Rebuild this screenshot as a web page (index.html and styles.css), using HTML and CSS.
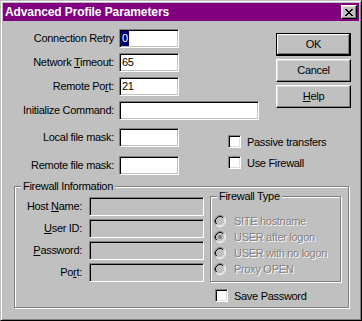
FILE: index.html
```html
<!DOCTYPE html>
<html>
<head>
<meta charset="utf-8">
<link rel="stylesheet" href="styles.css">
</head>
<body>
<div class="window">
  <div class="titlebar">
    <span class="title">Advanced Profile Parameters</span>
    <span class="close">
      <svg width="8" height="7" viewBox="0 0 8 7" shape-rendering="crispEdges">
        <path d="M0 0h2v1h-2zM6 0h2v1h-2zM1 1h2v1h-2zM5 1h2v1h-2zM2 2h4v1h-4zM3 3h2v1h-2zM2 4h4v1h-4zM1 5h2v1h-2zM5 5h2v1h-2zM0 6h2v1h-2zM6 6h2v1h-2z" fill="#000"/>
      </svg>
    </span>
  </div>
  <div class="body">
    <div class="top">
      <div class="lbl row1">Connection Retry</div>
      <div class="edit short row1"><span class="sel">0</span></div>
      <div class="lbl row2">Network <u>T</u>imeout:</div>
      <div class="edit short row2">65</div>
      <div class="lbl row3">Remote Po<u>r</u>t:</div>
      <div class="edit short row3">21</div>
      <div class="lbl row4">Initialize Command:</div>
      <div class="edit long row4"></div>
      <div class="lbl row5">Local file mask:</div>
      <div class="edit short row5"></div>
      <div class="lbl row6">Remote file mask:</div>
      <div class="edit short row6"></div>

      <div class="buttons">
        <div class="btn default">OK</div>
        <div class="btn">Cancel</div>
        <div class="btn"><u>H</u>elp</div>
      </div>

      <div class="checks">
        <div class="check"><span class="box"></span><span>Passive transfers</span></div>
        <div class="check"><span class="box"></span><span>Use Firewall</span></div>
      </div>
    </div>

    <div class="group fw">
      <span class="legend">Firewall Information</span>
      <div class="fw-fields">
        <div class="lbl">Host <u>N</u>ame:</div>
        <div class="edit disabled"></div>
        <div class="lbl"><u>U</u>ser ID:</div>
        <div class="edit disabled"></div>
        <div class="lbl"><u>P</u>assword:</div>
        <div class="edit disabled"></div>
        <div class="lbl">Po<u>r</u>t:</div>
        <div class="edit disabled"></div>
      </div>
      <div class="fw-right">
        <div class="group type">
          <span class="legend">Firewall Type</span>
          <div class="radio"><svg width="12" height="12" viewBox="0 0 12 12"><circle cx="6" cy="6" r="4.2" fill="#c0c0c0"/><path d="M2.11 9.89A5.5 5.5 0 0 1 9.89 2.11" fill="none" stroke="#808080"/><path d="M9.89 2.11A5.5 5.5 0 0 1 2.11 9.89" fill="none" stroke="#fff"/><path d="M2.82 9.18A4.5 4.5 0 0 1 9.18 2.82" fill="none" stroke="#000"/><path d="M9.18 2.82A4.5 4.5 0 0 1 2.82 9.18" fill="none" stroke="#dfdfdf"/></svg><span class="dis">SITE hostname</span></div>
          <div class="radio"><svg width="12" height="12" viewBox="0 0 12 12"><circle cx="6" cy="6" r="4.2" fill="#c0c0c0"/><path d="M2.11 9.89A5.5 5.5 0 0 1 9.89 2.11" fill="none" stroke="#808080"/><path d="M9.89 2.11A5.5 5.5 0 0 1 2.11 9.89" fill="none" stroke="#fff"/><path d="M2.82 9.18A4.5 4.5 0 0 1 9.18 2.82" fill="none" stroke="#000"/><path d="M9.18 2.82A4.5 4.5 0 0 1 2.82 9.18" fill="none" stroke="#dfdfdf"/><circle cx="6" cy="6" r="2" fill="#808080"/></svg><span class="dis">USER after logon</span></div>
          <div class="radio"><svg width="12" height="12" viewBox="0 0 12 12"><circle cx="6" cy="6" r="4.2" fill="#c0c0c0"/><path d="M2.11 9.89A5.5 5.5 0 0 1 9.89 2.11" fill="none" stroke="#808080"/><path d="M9.89 2.11A5.5 5.5 0 0 1 2.11 9.89" fill="none" stroke="#fff"/><path d="M2.82 9.18A4.5 4.5 0 0 1 9.18 2.82" fill="none" stroke="#000"/><path d="M9.18 2.82A4.5 4.5 0 0 1 2.82 9.18" fill="none" stroke="#dfdfdf"/></svg><span class="dis">USER with no logon</span></div>
          <div class="radio"><svg width="12" height="12" viewBox="0 0 12 12"><circle cx="6" cy="6" r="4.2" fill="#c0c0c0"/><path d="M2.11 9.89A5.5 5.5 0 0 1 9.89 2.11" fill="none" stroke="#808080"/><path d="M9.89 2.11A5.5 5.5 0 0 1 2.11 9.89" fill="none" stroke="#fff"/><path d="M2.82 9.18A4.5 4.5 0 0 1 9.18 2.82" fill="none" stroke="#000"/><path d="M9.18 2.82A4.5 4.5 0 0 1 2.82 9.18" fill="none" stroke="#dfdfdf"/></svg><span class="dis">Proxy OPEN</span></div>
        </div>
        <div class="check save"><span class="box"></span><span>Save Password</span></div>
      </div>
    </div>
  </div>
</div>
</body>
</html>
```

FILE: styles.css
```css
html, body {
  margin: 0;
  padding: 0;
  background: #c0c0c0;
}
body {
  font-family: "Liberation Sans", Arial, sans-serif;
  font-size: 11px;
  letter-spacing: -0.3px;
  color: #000;
}
u { text-decoration: underline; text-underline-offset: 1px; }

.window {
  width: 362px;
  height: 321px;
  box-sizing: border-box;
  border: 1px solid;
  border-color: #c0c0c0 #000 #000 #c0c0c0;
  box-shadow: inset 1px 1px #fff, inset -1px -1px #808080;
  padding: 2px;
  background: #c0c0c0;
  display: flex;
  flex-direction: column;
}

.titlebar {
  height: 18px;
  background: #800080;
  display: flex;
  align-items: center;
  justify-content: space-between;
  flex: none;
}
.title {
  color: #fff;
  font-weight: bold;
  font-size: 12px;
  letter-spacing: -0.1px;
  line-height: 18px;
  padding-left: 2px;
}
.close {
  width: 16px;
  height: 14px;
  box-sizing: border-box;
  margin-right: 2px;
  border: 1px solid;
  border-color: #fff #000 #000 #fff;
  box-shadow: inset -1px -1px #808080, inset 1px 1px #dfdfdf;
  background: #c0c0c0;
  display: flex;
  align-items: center;
  justify-content: center;
}
.close svg { display: block; }

.body { flex: 1; }

.top {
  display: grid;
  grid-template-columns: 116px 60px 49px 48px 75px;
  grid-template-rows: 24px 24px 24px 27px 28px 20px;
  padding-top: 8px;
}
.lbl {
  text-align: right;
  padding-right: 5px;
  line-height: 19px;
  white-space: nowrap;
}
.row1 { grid-row: 1; }
.row2 { grid-row: 2; }
.row3 { grid-row: 3; }
.row4 { grid-row: 4; }
.row5 { grid-row: 5; }
.row6 { grid-row: 6; }
.top .lbl { grid-column: 1; }
.top .edit { grid-column: 2 / span 3; justify-self: start; align-self: start; }

.edit {
  height: 19px;
  box-sizing: border-box;
  border: 1px solid;
  border-color: #808080 #fff #fff #808080;
  box-shadow: inset 1px 1px #000, inset -1px -1px #c0c0c0;
  background: #fff;
  padding: 1px 1px 0 2px;
  line-height: 15px;
  white-space: nowrap;
}
.edit.short { width: 60px; }
.edit.long { width: 140px; }
.edit.disabled { background: #c0c0c0; }
.sel {
  display: inline-block;
  background: #000080;
  color: #fff;
  padding: 0 1px;
  margin-left: -1px;
}

.buttons {
  grid-column: 5;
  grid-row: 1 / span 4;
  align-self: start;
  margin-top: 4px;
  display: flex;
  flex-direction: column;
  gap: 3px;
}
.btn {
  width: 75px;
  height: 23px;
  box-sizing: border-box;
  border: 1px solid;
  border-color: #fff #000 #000 #fff;
  box-shadow: inset -1px -1px #808080, inset 1px 1px #dfdfdf;
  text-align: center;
  line-height: 21px;
}
.btn.default {
  border-color: #000;
  box-shadow: inset -1px -1px #000, inset 1px 1px #fff, inset -2px -2px #808080;
}

.checks {
  grid-column: 4 / span 2;
  grid-row: 5 / span 2;
  align-self: start;
  margin-top: 7px;
  display: flex;
  flex-direction: column;
  gap: 8px;
}
.check {
  display: flex;
  align-items: center;
  gap: 6px;
  height: 13px;
  white-space: nowrap;
}
.box {
  width: 13px;
  height: 13px;
  box-sizing: border-box;
  flex: none;
  border: 1px solid;
  border-color: #808080 #fff #fff #808080;
  box-shadow: inset 1px 1px #000, inset -1px -1px #dfdfdf;
  background: #fff;
}

.group {
  border: 1px solid #808080;
  box-shadow: inset 1px 1px #fff, 1px 1px #fff;
  position: relative;
}
.legend {
  position: absolute;
  top: -7px;
  left: 6px;
  background: #c0c0c0;
  padding: 0 2px;
  line-height: 13px;
  white-space: nowrap;
}

.fw {
  margin: 10px 0 0 11px;
  width: 335px;
  height: 122px;
  box-sizing: border-box;
  display: flex;
  padding-top: 10px;
}
.fw-fields {
  display: grid;
  grid-template-columns: 74px 115px;
  grid-auto-rows: 19px;
  row-gap: 3px;
  align-content: start;
}
.fw-fields .lbl { padding-right: 7px; }
.fw-right {
  margin-left: 6px;
  margin-top: -1px;
  display: flex;
  flex-direction: column;
}
.type {
  width: 131px;
  height: 86px;
  box-sizing: border-box;
  padding: 16px 0 0 3px;
}
.radio {
  display: flex;
  align-items: center;
  gap: 8px;
  height: 16px;
  white-space: nowrap;
}
.radio svg { display: block; flex: none; }
.dis {
  color: #808080;
  text-shadow: 1px 1px 0 #fff;
}
.check.save {
  margin: 7px 0 0 5px;
}
```
